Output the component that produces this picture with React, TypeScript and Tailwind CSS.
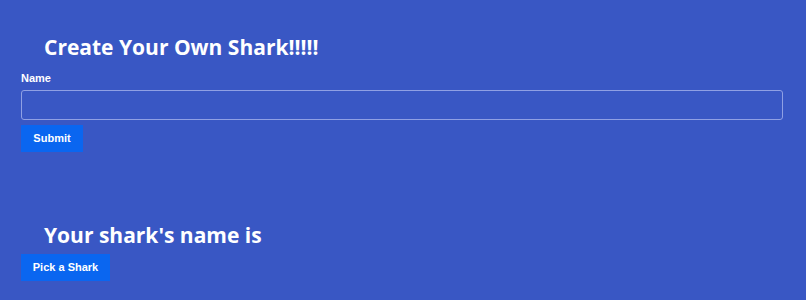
export default function App() {
  return (
    <div className="min-h-[300px] w-full bg-[#3957c4] pl-[21px] pr-[23px] pt-[33px] text-white" style={{ fontFamily: '"Liberation Sans", Arial, sans-serif' }}>
      <h1 className="pl-[23px] text-[21px] font-bold leading-[28px]" style={{ fontFamily: '"Open Sans", sans-serif' }}>
        Create Your Own Shark!!!!!
      </h1>
      <form className="mt-[10px]" onSubmit={(e) => e.preventDefault()}>
        <label className="block text-[11px] font-bold leading-[14px]">Name</label>
        <input
          type="text"
          className="mt-[5px] block h-[30px] w-full rounded-[3px] border border-[#8fa0e4] bg-transparent px-2 text-sm text-white outline-none"
        />
        <button type="submit" className="mt-[5px] h-[27px] w-[62px] bg-[#0a66f0] text-[11px] font-bold text-white">
          Submit
        </button>
      </form>
      <h2 className="mt-[69px] pl-[23px] text-[21px] font-bold leading-[28px]" style={{ fontFamily: '"Open Sans", sans-serif' }}>
        Your shark's name is
      </h2>
      <button type="button" className="mt-[5px] h-[27px] w-[89px] bg-[#0a66f0] text-[11px] font-bold text-white">
        Pick a Shark
      </button>
    </div>
  );
}
